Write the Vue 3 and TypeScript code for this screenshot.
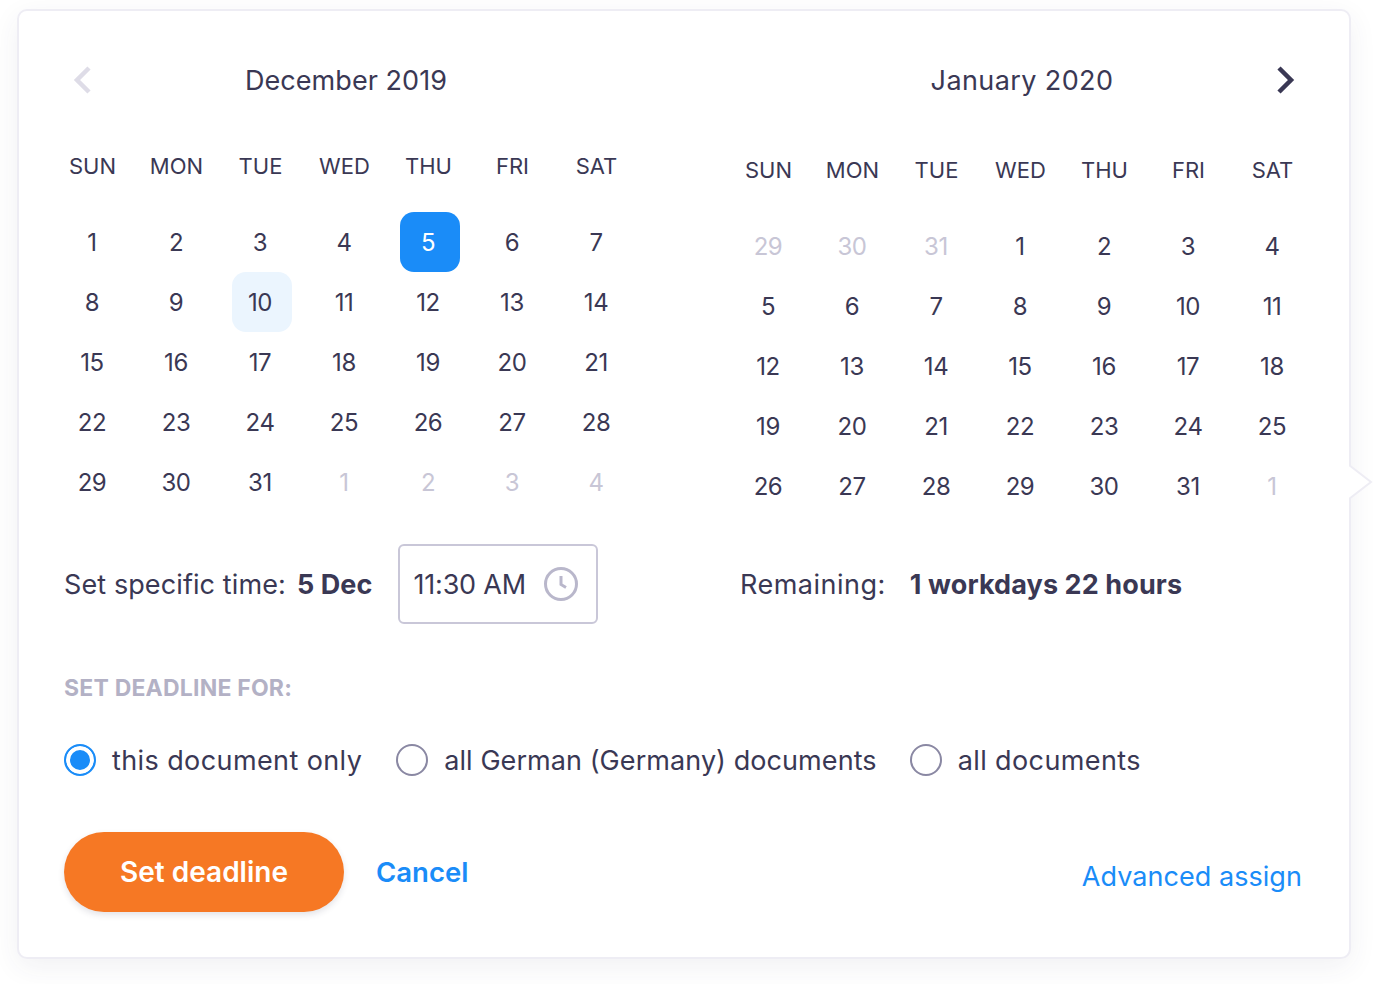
<template>
  <div class="page">
    <div class="card">
      <div class="months">
        <div v-for="(month, m) in months" :key="month.title" class="month" :class="{ second: m === 1 }">
          <div class="month-head">
            <span class="nav">
              <svg v-if="m === 0" width="20" height="30" viewBox="0 0 20 30">
                <path d="M17 3 L5 15 L17 27" fill="none" stroke="#dedce7" stroke-width="4.5" />
              </svg>
            </span>
            <span class="month-title">{{ month.title }}</span>
            <span class="nav nav-right">
              <svg v-if="m === 1" width="20" height="30" viewBox="0 0 20 30">
                <path d="M3 3 L15 15 L3 27" fill="none" stroke="#3a3854" stroke-width="4.5" />
              </svg>
            </span>
          </div>
          <div class="weekdays">
            <span v-for="w in weekdays" :key="w">{{ w }}</span>
          </div>
          <div class="days">
            <span
              v-for="(d, i) in month.days"
              :key="i"
              class="day"
              :class="{ muted: d.muted, selected: d.selected, today: d.today }"
            ><span class="num">{{ d.n }}</span></span>
          </div>
        </div>
      </div>

      <div class="times">
        <div class="time-left">
          <span>Set specific time:</span>
          <b class="date">5 Dec</b>
          <div class="time-input">
            <span class="time-value">11:30 AM</span>
            <svg width="36" height="36" viewBox="0 0 36 36">
              <circle cx="18" cy="18" r="15.5" fill="none" stroke="#b9b7cb" stroke-width="3" />
              <path d="M18 10 V18.5 L23 21.5" fill="none" stroke="#b9b7cb" stroke-width="3" />
            </svg>
          </div>
        </div>
        <div class="time-right">
          <span class="remain-label">Remaining:</span>
          <b class="remain">1 workdays 22 hours</b>
        </div>
      </div>

      <div class="label">SET DEADLINE FOR:</div>

      <div class="radios">
        <label v-for="o in options" :key="o.text" class="radio" :class="{ on: o.on }">
          <span class="dot"></span>
          <span>{{ o.text }}</span>
        </label>
      </div>

      <div class="actions">
        <button class="primary">Set deadline</button>
        <a class="cancel">Cancel</a>
        <a class="advanced">Advanced assign</a>
      </div>

      <svg class="pointer" width="24" height="38" viewBox="0 0 24 38">
        <path d="M0 1 L22 18 L0 35" fill="#fff" stroke="#eeedf4" stroke-width="2" />
      </svg>
    </div>
  </div>
</template>

<script setup lang="ts">
interface Day {
  n: number;
  muted?: boolean;
  selected?: boolean;
  today?: boolean;
}

const weekdays = ['SUN', 'MON', 'TUE', 'WED', 'THU', 'FRI', 'SAT'];

const range = (from: number, to: number, muted = false): Day[] => {
  const out: Day[] = [];
  for (let i = from; i <= to; i++) out.push({ n: i, muted });
  return out;
};

const december = [...range(1, 31), ...range(1, 4, true)];
december[4].selected = true;
december[9].today = true;

const months = [
  { title: 'December 2019', days: december },
  { title: 'January 2020', days: [...range(29, 31, true), ...range(1, 31), ...range(1, 1, true)] }
];

const options = [
  { text: 'this document only', on: true },
  { text: 'all German (Germany) documents', on: false },
  { text: 'all documents', on: false }
];
</script>

<style>
html, body {
  background: #fff;
}
</style>

<style scoped>
.page {
  padding: 9px 0 0 17px;
  height: 975px;
  overflow: hidden;
  font-family: Inter, "Liberation Sans", sans-serif;
  color: #3a3854;
}
.card {
  position: relative;
  box-sizing: border-box;
  width: 1334px;
  height: 950px;
  padding: 39px 45px 0;
  background: #fff;
  border: 2px solid #eeedf4;
  border-radius: 10px;
  box-shadow: 0 8px 28px rgba(58, 56, 84, 0.07);
}
.months {
  display: flex;
  gap: 112px;
}
.month {
  width: 564px;
}
.month-head {
  display: grid;
  grid-template-columns: 1fr auto 1fr;
  align-items: center;
  height: 60px;
}
.nav {
  display: flex;
  padding: 0 8px;
}
.nav-right {
  justify-content: flex-end;
}
.month-title {
  font-size: 27px;
  letter-spacing: 0.05px;
}
.second .month-title {
  letter-spacing: 0.4px;
}
.weekdays {
  display: grid;
  grid-template-columns: repeat(7, 60px);
  column-gap: 24px;
  height: 32px;
  margin: 40px 0 30px;
  line-height: 32px;
  font-size: 22px;
}
.second .weekdays {
  margin-top: 44px;
}
.weekdays span {
  padding-right: 3px;
  text-align: center;
}
.days {
  display: grid;
  grid-template-columns: repeat(7, 60px);
  grid-auto-rows: 60px;
  column-gap: 24px;
}
.day {
  display: flex;
  align-items: center;
  justify-content: center;
  font-size: 24px;
  letter-spacing: -0.4px;
  border-radius: 14px;
}
.num {
  padding-right: 4px;
}
.muted {
  color: #c8c6d6;
}
.selected {
  background: #1a8cf8;
  color: #fff;
}
.today {
  background: #ebf5fe;
}
.times {
  display: flex;
  gap: 112px;
  margin-top: 28px;
  height: 80px;
  font-size: 27px;
  letter-spacing: 0.1px;
}
.time-left,
.time-right {
  display: flex;
  align-items: center;
  width: 564px;
}
.date {
  margin-left: 11px;
  font-weight: 700;
}
.time-input {
  display: flex;
  align-items: center;
  justify-content: space-between;
  box-sizing: border-box;
  width: 200px;
  height: 80px;
  margin-left: 25px;
  padding: 0 17px 0 14px;
  border: 2px solid #c9c7d8;
  border-radius: 6px;
}
.time-value {
  letter-spacing: -0.2px;
}
.remain-label {
  letter-spacing: 0.5px;
}
.remain {
  margin-left: 24px;
  font-weight: 700;
}
.label {
  margin-top: 50px;
  line-height: 28px;
  font-size: 23px;
  letter-spacing: 0.2px;
  font-weight: 700;
  color: #b3b1c5;
}
.radios {
  display: flex;
  gap: 33px;
  margin-top: 42px;
  font-size: 27px;
  letter-spacing: 0.4px;
}
.radio {
  display: flex;
  align-items: center;
  gap: 16px;
  height: 32px;
}
.radio:first-child {
  margin-right: 1px;
}
.radio:nth-child(2) {
  letter-spacing: 0.07px;
}
.dot {
  box-sizing: border-box;
  width: 32px;
  height: 32px;
  border: 2px solid #8a88a3;
  border-radius: 50%;
}
.on .dot {
  border-color: #1a8cf8;
  background: #1a8cf8;
  box-shadow: inset 0 0 0 4px #fff;
}
.actions {
  display: flex;
  align-items: center;
  margin-top: 56px;
}
.primary {
  width: 280px;
  height: 80px;
  border: 0;
  border-radius: 40px;
  background: #f67824;
  color: #fff;
  font: 600 28px Inter, "Liberation Sans", sans-serif;
  box-shadow: 0 3px 6px rgba(58, 56, 84, 0.14);
}
.cancel {
  margin-left: 32px;
  font-size: 27.5px;
  font-weight: 600;
  color: #1a8cf8;
}
.advanced {
  margin: 8px 2px 0 auto;
  font-size: 27px;
  letter-spacing: 0.05px;
  color: #1a8cf8;
}
.pointer {
  position: absolute;
  top: 453px;
  right: -24px;
}
</style>
